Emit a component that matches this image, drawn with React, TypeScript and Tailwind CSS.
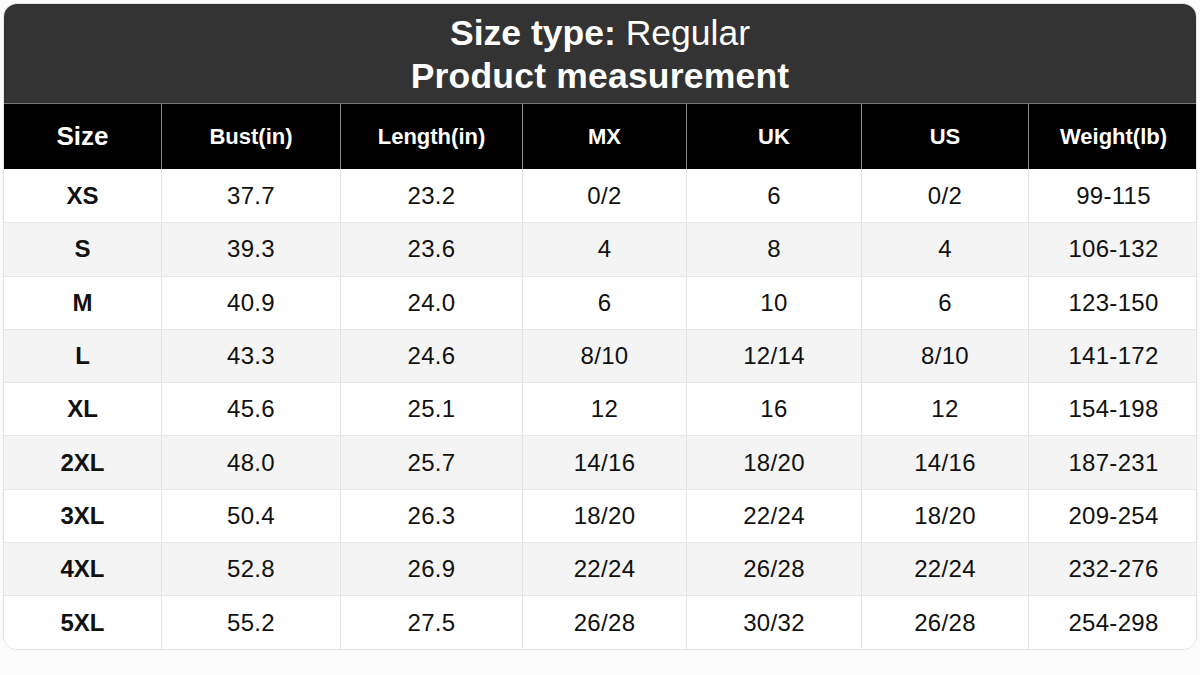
import React from "react";

const headers = ["Size", "Bust(in)", "Length(in)", "MX", "UK", "US", "Weight(lb)"];
const rows = [
  ["XS", "37.7", "23.2", "0/2", "6", "0/2", "99-115"],
  ["S", "39.3", "23.6", "4", "8", "4", "106-132"],
  ["M", "40.9", "24.0", "6", "10", "6", "123-150"],
  ["L", "43.3", "24.6", "8/10", "12/14", "8/10", "141-172"],
  ["XL", "45.6", "25.1", "12", "16", "12", "154-198"],
  ["2XL", "48.0", "25.7", "14/16", "18/20", "14/16", "187-231"],
  ["3XL", "50.4", "26.3", "18/20", "22/24", "18/20", "209-254"],
  ["4XL", "52.8", "26.9", "22/24", "26/28", "22/24", "232-276"],
  ["5XL", "55.2", "27.5", "26/28", "30/32", "26/28", "254-298"],
];

const gridCols = "grid grid-cols-[158px_179px_182px_164px_175px_167px_169px]";

export default function App() {
  return (
    <div
      className="w-[1200px] h-[675px] bg-[#fbfbfb] pt-[3px] pl-[3px]"
      style={{ fontFamily: '"Liberation Sans", Arial, sans-serif' }}
    >
      <div className="w-[1194px] rounded-[14px] overflow-hidden border border-[#e2e2e2] bg-white">
        <div className="h-[99px] bg-[#333333] flex flex-col items-center justify-center text-white text-[35.5px] leading-[43px] pt-[2px]">
          <div>
            <span className="font-bold">Size type:</span> Regular
          </div>
          <div className="font-bold tracking-[0.2px]">Product measurement</div>
        </div>
        <div className={`${gridCols} h-[66px] bg-black text-white font-bold border-t border-[#777]`}>
          {headers.map((h, i) => (
            <div
              key={h}
              className={`flex items-center justify-center ${i === 0 ? "text-[26px]" : "text-[22px]"} ${
                i < headers.length - 1 ? "border-r border-[#8a8a8a]" : ""
              }`}
            >
              {h}
            </div>
          ))}
        </div>
        {rows.map((r, ri) => (
          <div
            key={r[0]}
            className={`${gridCols} h-[53.3px] ${ri % 2 === 1 ? "bg-[#f4f4f4]" : "bg-white"} ${
              ri > 0 ? "border-t border-[#e6e6e6]" : ""
            } text-[#111]`}
          >
            {r.map((c, ci) => (
              <div
                key={ci}
                className={`flex items-center justify-center text-[24px] ${ci === 0 ? "font-bold text-[23px]" : "tracking-[0.3px]"} ${
                  ci < r.length - 1 ? "border-r border-[#e3e3e3]" : ""
                }`}
              >
                {c}
              </div>
            ))}
          </div>
        ))}
      </div>
    </div>
  );
}
